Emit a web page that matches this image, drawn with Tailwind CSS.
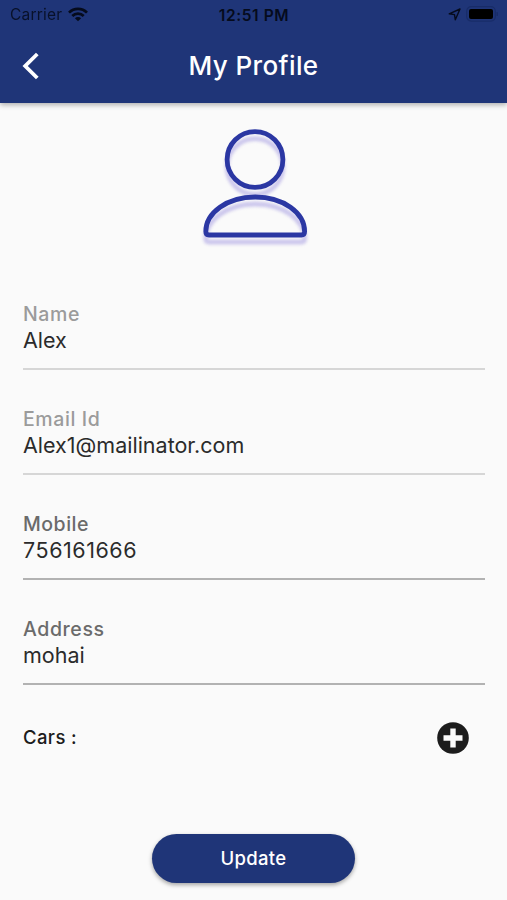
<!DOCTYPE html>
<html lang="en">
<head>
  <meta charset="UTF-8">
  <meta name="viewport" content="width=device-width, initial-scale=1.0">
  <title>My Profile</title>
  <script src="https://cdn.jsdelivr.net/npm/@tailwindcss/browser@4"></script>
</head>
<body class="h-[900px] flex flex-col overflow-hidden bg-[#fafafa] text-[#2b2b2b] font-['Inter',sans-serif]">
  <header class="h-[103px] shrink-0 bg-[#1f3578] shadow-[0_2px_5px_rgba(0,0,0,0.3)]">
    <!-- status bar -->
    <div class="h-[30px] grid grid-cols-3 items-center pl-[10px] pr-[9px] text-[#050b1c]">
      <div class="flex items-center gap-[6px]">
        <span class="text-[15.5px] leading-none tracking-[0.2px] opacity-85">Carrier</span>
        <svg class="w-5 h-[15px] -mt-px" viewBox="0 0 20 15" fill="none" stroke="currentColor" stroke-width="2.7">
          <path d="M1 5.6A12.7 12.7 0 0 1 19 5.6"/>
          <path d="M4.3 9A8 8 0 0 1 15.7 9"/>
          <path d="M10 14.3L6.9 11.2A4.4 4.4 0 0 1 13.1 11.2Z" fill="currentColor" stroke="none"/>
        </svg>
      </div>
      <span class="pt-px text-center text-[15.5px] leading-none font-semibold tracking-[0.6px] whitespace-nowrap">12:51 PM</span>
      <div class="flex items-center justify-end gap-[5px]">
        <svg class="w-[13px] h-[13px] -mt-px" viewBox="0 0 13 13" fill="none" stroke="currentColor" stroke-width="1.4" stroke-linejoin="round">
          <path d="M12 1L7.3 11.8L6.5 6.6L1.2 5.8Z"/>
        </svg>
        <svg class="w-[32px] h-[16px] -mt-[2px]" viewBox="0 0 32 16">
          <rect x="0.7" y="0.7" width="28.600" height="14.4" rx="4.5" fill="none" stroke="#182c68" stroke-width="1.2"/>
          <rect x="3" y="3" width="24" height="10" rx="2" fill="#000"/>
          <path d="M30.500 6a2 2 0 0 1 0 4z" fill="#182c68"/>
        </svg>
      </div>
    </div>
    <!-- title bar -->
    <div class="h-[72px] grid grid-cols-[60px_1fr_60px] items-center text-white">
      <svg class="ml-[22px] w-[18px] h-[28px]" viewBox="0 0 18 28" fill="none" stroke="currentColor" stroke-width="3.8">
        <path d="M15.3 2L3.2 14L15.3 26"/>
      </svg>
      <h1 class="text-center text-[26px] leading-none font-medium tracking-[0.4px]">My Profile</h1>
    </div>
  </header>

  <main class="flex flex-col pl-[23px] pr-[22px]">
    <svg class="mt-[23px] self-center ml-[2px] w-[120px] h-[130px]" viewBox="0 0 120 130" fill="none" stroke-width="4.8" stroke-linejoin="round">
      <g stroke="#cbc6ec" class="blur-[1.5px]" transform="translate(0 7)">
        <circle cx="60" cy="33.500" r="27.900"/>
        <path d="M14 109Q10.800 109 10.800 105.500C10.800 87 32 71 60.200 71S109.600 87 109.600 105.500Q109.600 109 106.400 109Z"/>
      </g>
      <g stroke="#2b37a3">
        <circle cx="60" cy="33.500" r="27.900"/>
        <path d="M14 109Q10.800 109 10.800 105.500C10.800 87 32 71 60.200 71S109.600 87 109.600 105.500Q109.600 109 106.400 109Z"/>
      </g>
    </svg>

    <div class="mt-[9px] h-[105px] flex flex-col justify-end border-b-2 border-[#d6d6d6]">
      <label class="text-[19.5px] leading-[26px] font-medium tracking-[0.6px] text-[#9b9b9b]">Name</label>
      <span class="text-[21.5px] leading-[26px] pb-[15px]">Alex</span>
    </div>
    <div class="h-[105px] flex flex-col justify-end border-b-2 border-[#d6d6d6]">
      <label class="text-[19.5px] leading-[26px] font-medium tracking-[0.6px] text-[#9b9b9b]">Email Id</label>
      <span class="text-[21.5px] leading-[26px] pb-[15px]">Alex1@mailinator.com</span>
    </div>
    <div class="h-[105px] flex flex-col justify-end border-b-2 border-[#b2b2b2]">
      <label class="text-[19.5px] leading-[26px] font-medium tracking-[0.5px] text-[#6b6b6b]">Mobile</label>
      <span class="text-[21.5px] leading-[26px] tracking-[0.55px] pb-[15px]">756161666</span>
    </div>
    <div class="h-[105px] flex flex-col justify-end border-b-2 border-[#b2b2b2]">
      <label class="text-[19.5px] leading-[26px] font-medium tracking-[0.6px] text-[#6b6b6b]">Address</label>
      <span class="text-[21.5px] leading-[26px] pb-[15px]">mohai</span>
    </div>

    <div class="mt-[37px] h-8 flex items-center justify-between pr-4">
      <span class="text-[18.5px] font-medium tracking-[0.4px] text-[#1c1c1c]">Cars :</span>
      <svg class="w-8 h-8" viewBox="0 0 32 32">
        <circle cx="16" cy="16" r="15.800" fill="#1c1c1c"/>
        <path d="M13.300 6.500h5.400v6.800h6.800v5.400h-6.800v6.800h-5.400v-6.800H6.500v-5.400h6.800z" fill="#fafafa"/>
      </svg>
    </div>

    <button class="mt-20 self-center -ml-px w-[203px] h-[49px] rounded-full bg-[#1f3578] text-white text-[18.5px] font-medium tracking-[0.3px] shadow-[0_2px_4px_rgba(0,0,0,0.35)]">Update</button>
  </main>
</body>
</html>
